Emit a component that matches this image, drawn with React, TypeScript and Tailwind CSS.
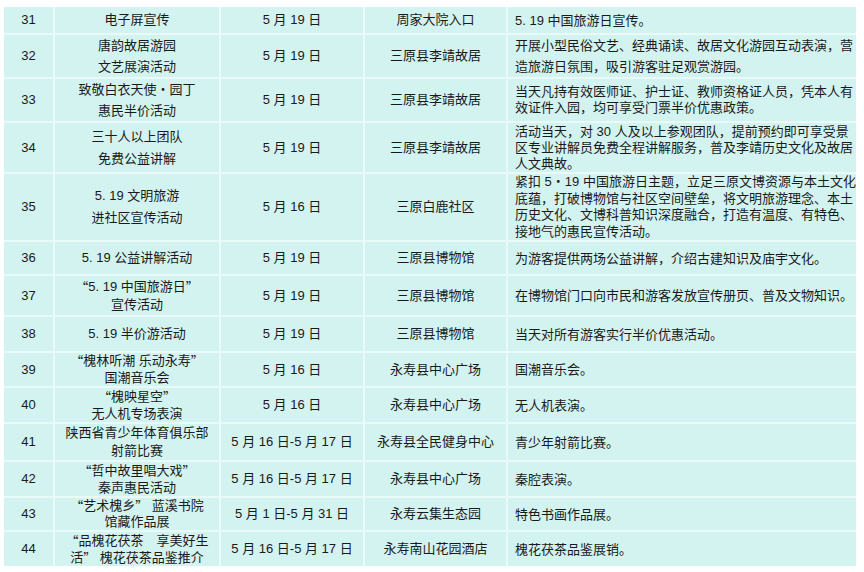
import React from "react";

type Row = {
  n: string;
  name: string[];
  date: string;
  place: string;
  desc: string[];
  h: string;
  nameLh: string;
  descLh: string;
};

const rows: Row[] = [
  { n: "31", name: ["电子屏宣传"], date: "5 月 19 日", place: "周家大院入口", desc: ["5. 19 中国旅游日宣传。"], h: "h-[26px]", nameLh: "leading-[22px]", descLh: "leading-[17px]" },
  { n: "32", name: ["唐韵故居游园", "文艺展演活动"], date: "5 月 19 日", place: "三原县李靖故居", desc: ["开展小型民俗文艺、经典诵读、故居文化游园互动表演，营", "造旅游日氛围，吸引游客驻足观赏游园。"], h: "h-[42px]", nameLh: "leading-[21px]", descLh: "leading-[21px]" },
  { n: "33", name: ["致敬白衣天使・园丁", "惠民半价活动"], date: "5 月 19 日", place: "三原县李靖故居", desc: ["当天凡持有效医师证、护士证、教师资格证人员，凭本人有", "效证件入园，均可享受门票半价优惠政策。"], h: "h-[42px]", nameLh: "leading-[21px]", descLh: "leading-[16.5px]" },
  { n: "34", name: ["三十人以上团队", "免费公益讲解"], date: "5 月 19 日", place: "三原县李靖故居", desc: ["活动当天，对 30 人及以上参观团队，提前预约即可享受景", "区专业讲解员免费全程讲解服务，普及李靖历史文化及故居", "人文典故。"], h: "h-[49px]", nameLh: "leading-[22px]", descLh: "leading-[16px]" },
  { n: "35", name: ["5. 19 文明旅游", "进社区宣传活动"], date: "5 月 16 日", place: "三原白鹿社区", desc: ["紧扣 5・19 中国旅游日主题，立足三原文博资源与本土文化", "底蕴，打破博物馆与社区空间壁垒，将文明旅游理念、本土", "历史文化、文博科普知识深度融合，打造有温度、有特色、", "接地气的惠民宣传活动。"], h: "h-[66px]", nameLh: "leading-[22px]", descLh: "leading-[16.5px]" },
  { n: "36", name: ["5. 19 公益讲解活动"], date: "5 月 19 日", place: "三原县博物馆", desc: ["为游客提供两场公益讲解，介绍古建知识及庙宇文化。"], h: "h-[32px]", nameLh: "leading-[18px]", descLh: "leading-[17px]" },
  { n: "37", name: ["“5. 19 中国旅游日”", "宣传活动"], date: "5 月 19 日", place: "三原县博物馆", desc: ["在博物馆门口向市民和游客发放宣传册页、普及文物知识。"], h: "h-[39px]", nameLh: "leading-[18px]", descLh: "leading-[17px]" },
  { n: "38", name: ["5. 19 半价游活动"], date: "5 月 19 日", place: "三原县博物馆", desc: ["当天对所有游客实行半价优惠活动。"], h: "h-[34px]", nameLh: "leading-[18px]", descLh: "leading-[17px]" },
  { n: "39", name: ["“槐林听潮 乐动永寿”", "国潮音乐会"], date: "5 月 16 日", place: "永寿县中心广场", desc: ["国潮音乐会。"], h: "h-[33px]", nameLh: "leading-[16.5px]", descLh: "leading-[17px]" },
  { n: "40", name: ["“槐映星空”", "无人机专场表演"], date: "5 月 16 日", place: "永寿县中心广场", desc: ["无人机表演。"], h: "h-[34px]", nameLh: "leading-[17px]", descLh: "leading-[17px]" },
  { n: "41", name: ["陕西省青少年体育俱乐部", "射箭比赛"], date: "5 月 16 日-5 月 17 日", place: "永寿县全民健身中心", desc: ["青少年射箭比赛。"], h: "h-[36px]", nameLh: "leading-[18px]", descLh: "leading-[17px]" },
  { n: "42", name: ["“哲中故里唱大戏”", "秦声惠民活动"], date: "5 月 16 日-5 月 17 日", place: "永寿县中心广场", desc: ["秦腔表演。"], h: "h-[34px]", nameLh: "leading-[17px]", descLh: "leading-[17px]" },
  { n: "43", name: ["“艺术槐乡” 蓝溪书院", "馆藏作品展"], date: "5 月 1 日-5 月 31 日", place: "永寿云集生态园", desc: ["特色书画作品展。"], h: "h-[32px]", nameLh: "leading-[16px]", descLh: "leading-[17px]" },
  { n: "44", name: ["“品槐花茯茶　享美好生", "活” 槐花茯茶品鉴推介"], date: "5 月 16 日-5 月 17 日", place: "永寿南山花园酒店", desc: ["槐花茯茶品鉴展销。"], h: "h-[34px]", nameLh: "leading-[17px]", descLh: "leading-[17px]" },
];

function Txt({ s }: { s: string }) {
  const parts = s.split(/([“”])/);
  return (
    <>
      {parts.map((p, i) =>
        p === "“" || p === "”" ? (
          <span key={i} className="align-top" style={{ fontFamily: '"Noto Sans CJK SC", sans-serif' }}>
            {p}
          </span>
        ) : (
          <React.Fragment key={i}>{p}</React.Fragment>
        )
      )}
    </>
  );
}

const cell = "bg-[#d3f3f1] flex items-center whitespace-nowrap";

export default function App() {
  return (
    <div className="w-[864px] h-[572px] bg-white pt-[7px] pl-[4px]">
      <div
        className="w-[852px] flex flex-col gap-[2px] bg-[#e9faf9] text-[13px] text-[#1a1a1a]"
        style={{ fontFamily: '"Liberation Sans", "Noto Sans CJK SC", sans-serif' }}
      >
        {rows.map((r) => (
          <div key={r.n} className={`grid grid-cols-[49px_164px_142px_141px_348px] gap-[2px] ${r.h}`}>
            <div className={`${cell} justify-center`}>{r.n}</div>
            <div className={`${cell} justify-center flex-col text-center ${r.nameLh}`}>
              {r.name.map((l, i) => (
                <div key={i} className="h-auto">
                  <Txt s={l} />
                </div>
              ))}
            </div>
            <div className={`${cell} justify-center`}>{r.date}</div>
            <div className={`${cell} justify-center`}>{r.place}</div>
            <div className={`${cell} flex-col !items-start justify-center pl-[7px] ${r.descLh}`}>
              {r.desc.map((l, i) => (
                <div key={i}>{l}</div>
              ))}
            </div>
          </div>
        ))}
      </div>
    </div>
  );
}
